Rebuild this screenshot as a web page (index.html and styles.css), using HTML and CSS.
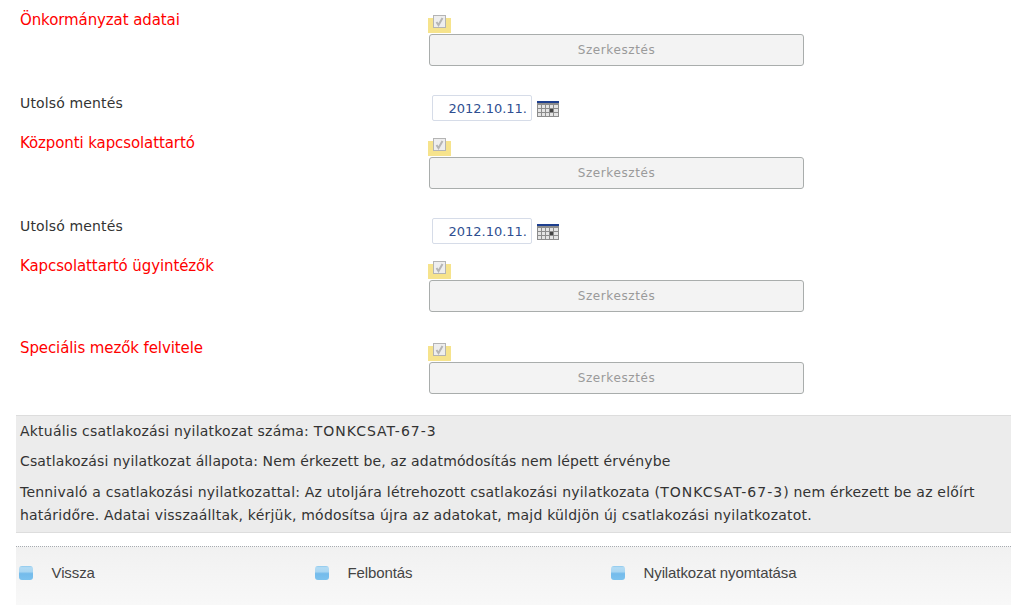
FILE: index.html
```html
<!DOCTYPE html>
<html lang="hu">
<head>
<meta charset="utf-8">
<title>Önkormányzat adatai</title>
<link rel="stylesheet" href="styles.css">
</head>
<body>
<form class="form">
  <div class="row row-first">
    <div class="label label-red">Önkormányzat adatai</div>
    <div class="field">
      <span class="check"><span class="check-box"><svg viewBox="0 0 11 11" width="11" height="11"><path d="M2.5 6 4.5 9 8.5 2" fill="none" stroke="#b5b5b5" stroke-width="2"/></svg></span></span>
      <button type="button" class="btn" disabled>Szerkesztés</button>
    </div>
  </div>
  <div class="row row-date">
    <div class="label">Utolsó mentés</div>
    <div class="date">
      <span class="date-input">2012.10.11.</span>
      <svg class="cal" viewBox="0 0 22 16" width="22" height="16"><rect width="22" height="16" fill="#8c8c8c"/><rect width="22" height="2" fill="#1d3f8f"/><g fill="#e4e4e4"><rect x="1" y="4" width="3" height="3"/><rect x="5" y="4" width="3" height="3"/><rect x="9" y="4" width="3" height="3"/><rect x="13" y="4" width="3" height="3"/><rect x="17" y="4" width="4" height="3"/><rect x="1" y="8" width="3" height="3"/><rect x="5" y="8" width="3" height="3"/><rect x="9" y="8" width="3" height="3"/><rect x="17" y="8" width="4" height="3"/><rect x="1" y="12" width="3" height="3"/><rect x="5" y="12" width="3" height="3"/><rect x="9" y="12" width="3" height="3"/><rect x="13" y="12" width="3" height="3"/><rect x="17" y="12" width="4" height="3"/></g><rect x="13" y="8" width="3" height="3" fill="#444"/></svg>
    </div>
  </div>
  <div class="row row-first">
    <div class="label label-red">Központi kapcsolattartó</div>
    <div class="field">
      <span class="check"><span class="check-box"><svg viewBox="0 0 11 11" width="11" height="11"><path d="M2.5 6 4.5 9 8.5 2" fill="none" stroke="#b5b5b5" stroke-width="2"/></svg></span></span>
      <button type="button" class="btn" disabled>Szerkesztés</button>
    </div>
  </div>
  <div class="row row-date">
    <div class="label">Utolsó mentés</div>
    <div class="date">
      <span class="date-input">2012.10.11.</span>
      <svg class="cal" viewBox="0 0 22 16" width="22" height="16"><rect width="22" height="16" fill="#8c8c8c"/><rect width="22" height="2" fill="#1d3f8f"/><g fill="#e4e4e4"><rect x="1" y="4" width="3" height="3"/><rect x="5" y="4" width="3" height="3"/><rect x="9" y="4" width="3" height="3"/><rect x="13" y="4" width="3" height="3"/><rect x="17" y="4" width="4" height="3"/><rect x="1" y="8" width="3" height="3"/><rect x="5" y="8" width="3" height="3"/><rect x="9" y="8" width="3" height="3"/><rect x="17" y="8" width="4" height="3"/><rect x="1" y="12" width="3" height="3"/><rect x="5" y="12" width="3" height="3"/><rect x="9" y="12" width="3" height="3"/><rect x="13" y="12" width="3" height="3"/><rect x="17" y="12" width="4" height="3"/></g><rect x="13" y="8" width="3" height="3" fill="#444"/></svg>
    </div>
  </div>
  <div class="row">
    <div class="label label-red">Kapcsolattartó ügyintézők</div>
    <div class="field">
      <span class="check"><span class="check-box"><svg viewBox="0 0 11 11" width="11" height="11"><path d="M2.5 6 4.5 9 8.5 2" fill="none" stroke="#b5b5b5" stroke-width="2"/></svg></span></span>
      <button type="button" class="btn" disabled>Szerkesztés</button>
    </div>
  </div>
  <div class="row">
    <div class="label label-red">Speciális mezők felvitele</div>
    <div class="field">
      <span class="check"><span class="check-box"><svg viewBox="0 0 11 11" width="11" height="11"><path d="M2.5 6 4.5 9 8.5 2" fill="none" stroke="#b5b5b5" stroke-width="2"/></svg></span></span>
      <button type="button" class="btn" disabled>Szerkesztés</button>
    </div>
  </div>
</form>
<section class="status">
  <p>Aktuális csatlakozási nyilatkozat száma: <span class="code">TONKCSAT-67-3</span></p>
  <p>Csatlakozási nyilatkozat állapota: Nem érkezett be, az adatmódosítás nem lépett érvénybe</p>
  <p>Tennivaló a csatlakozási nyilatkozattal: Az utoljára létrehozott csatlakozási nyilatkozata (<span class="code">TONKCSAT-67-3</span>) nem érkezett be az előírt határidőre. Adatai visszaálltak, kérjük, módosítsa újra az adatokat, majd küldjön új csatlakozási nyilatkozatot.</p>
</section>
<nav class="actions">
  <a class="action"><span class="bullet"></span>Vissza</a>
  <a class="action"><span class="bullet"></span>Felbontás</a>
  <a class="action"><span class="bullet"></span>Nyilatkozat nyomtatása</a>
</nav>
</body>
</html>
```
FILE: styles.css
```css
html, body { margin: 0; padding: 0; background: #fff; }
body {
  width: 1011px;
  height: 605px;
  overflow: hidden;
  font-family: "DejaVu Sans", Verdana, sans-serif;
  font-size: 14px;
  color: #333;
}
.form { padding-left: 20px; padding-top: 11px; height: 415px; box-sizing: border-box; }
.row {
  display: grid;
  grid-template-columns: 409px 375px;
  height: 82px;
}
.row-date { height: 39px; }
.row-first { height: 84px; }
.label { font-size: 14px; line-height: 17px; letter-spacing: .15px; }
.label-red { color: #f00; font-size: 15px; line-height: 19px; letter-spacing: -.1px; }
.field { display: flex; flex-direction: column; padding-top: 7px; }
.check {
  width: 23px; height: 15px;
  background: #f6e38c;
  margin-left: -1px;
  display: block;
  position: relative;
  margin-bottom: 1px;
}
.check-box {
  position: absolute;
  left: 5px; top: -3px;
  width: 11px; height: 11px;
  border: 1px solid #b4b4b4;
  background: #eee;
  display: block;
}
.check-box svg { display: block; }
.btn {
  width: 375px; height: 32px;
  border: 1px solid #a9adac;
  border-radius: 3px;
  background: #f3f3f3;
  color: #9a9a9a;
  font: 12px/1 "DejaVu Sans", sans-serif;
  letter-spacing: .6px;
  padding: 0;
}
.date { display: flex; align-items: flex-start; padding-left: 3px; }
.date-input {
  width: 100px; height: 26px;
  box-sizing: border-box;
  border: 1px solid #d6dce8;
  border-radius: 2px;
  text-align: right;
  padding-right: 4px;
  color: #2f4f91;
  font-size: 13px;
  line-height: 25px;
}
.cal { margin: 6px 0 0 5px; }
.status {
  margin-left: 16px;
  width: 995px;
  height: 118px;
  box-sizing: border-box;
  background: #ececec;
  border-top: 1px solid #ddd;
  border-bottom: 1px solid #ddd;
  padding: 4px 4px 0;
  line-height: 23px;
  letter-spacing: .21px;
}
.status p { margin: 0 0 7px; }
.status p:nth-child(2) { letter-spacing: .13px; }
.status p:last-child { margin-top: 8px; }
.code { letter-spacing: 1px; }
.actions {
  margin: 13px 0 0 16px;
  width: 995px;
  height: 59px;
  box-sizing: border-box;
  border-top: 1px dotted #a7abb0;
  background: linear-gradient(#f1f1f1, #f8f8f8);
  display: grid;
  grid-template-columns: 296px 296px 1fr;
  padding: 16px 0 0 3px;
  font: 15px/20px "Liberation Sans", Arial, sans-serif;
  letter-spacing: -.1px;
  color: #444;
}
.action { display: flex; align-items: center; height: 20px; }
.bullet {
  width: 14px; height: 14px;
  border-radius: 3px;
  background: linear-gradient(#8cc8ee 0, #b4dcf4 12%, #a9d6f2 40%, #74bbeb 55%, #7cc2ee 100%);
  margin-right: 18.5px;
}
```
